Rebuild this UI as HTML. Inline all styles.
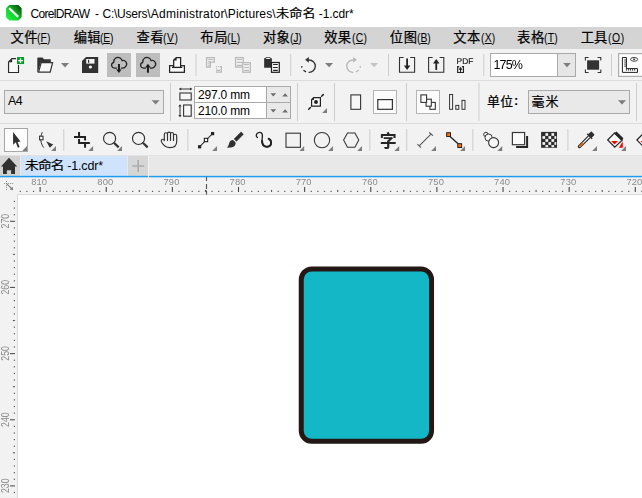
<!DOCTYPE html>
<html lang="zh">
<head>
<meta charset="utf-8">
<title>CorelDRAW</title>
<style>
html,body{margin:0;padding:0;}
body{width:642px;height:498px;overflow:hidden;background:#fff;position:relative;
 font-family:"Liberation Sans","Noto Sans CJK SC",sans-serif;color:#000;}
.abs{position:absolute;}
svg{position:absolute;left:0;overflow:hidden;}
#title{left:0;top:0;width:642px;height:27px;background:#fff;}
#title span{position:absolute;top:7px;font-size:12px;line-height:15px;white-space:nowrap;}
#menu{left:0;top:27px;width:642px;height:22px;background:#d4d4d4;}
#menu span{position:absolute;top:3px;font-size:12px;line-height:16px;white-space:nowrap;letter-spacing:0.2px;}
#menu span b{font-weight:normal;font-size:11px;letter-spacing:-0.3px;}
#tb1{left:0;top:49px;width:642px;height:31px;background:#f2f2f2;}
#pb{left:0;top:80px;width:642px;height:43px;background:#f2f2f2;border-top:1px solid #dcdcdc;box-sizing:border-box;}
#tools{left:0;top:123px;width:642px;height:33px;background:#f2f2f2;border-top:1px solid #dcdcdc;box-sizing:border-box;}
#tabs{left:0;top:156px;width:642px;height:20px;background:#e8e8e8;}
#hr{left:0;top:177px;width:642px;height:18px;background:#f2f2f2;}
#vr{left:0;top:195px;width:18px;height:303px;background:#f2f2f2;}
#canvas{left:17px;top:194px;width:625px;height:304px;background:#fff;border-left:1px solid #dadada;border-top:1px solid #dadada;box-sizing:border-box;}
.tx{position:absolute;font-size:12px;line-height:15px;white-space:nowrap;}
.tx u{text-decoration:underline;text-underline-offset:1px;}
</style>
</head>
<body>
<div id="title" class="abs">
 <svg style="top:0" width="30" height="27" viewBox="0 0 30 27">
  <defs><linearGradient id="lg" x1="0.95" y1="0.05" x2="0.1" y2="0.9"><stop offset="0" stop-color="#04560a"/><stop offset="0.3" stop-color="#0c8a1c"/><stop offset="0.6" stop-color="#14cf30"/><stop offset="1" stop-color="#1cf03a"/></linearGradient>
  <linearGradient id="lw" x1="0" y1="0" x2="1" y2="1"><stop offset="0" stop-color="#ffffff"/><stop offset="1" stop-color="#d9f5dc"/></linearGradient></defs>
  <path d="M9.6,5.8 H18.1 L20.9,8.6 V17 L18.1,19.8 H9.6 L6.8,17 V8.6 Z" fill="url(#lg)" stroke="url(#lg)" stroke-width="1.5" stroke-linejoin="round"/>
  <path d="M10,9 L17.3,16.1" stroke="url(#lw)" stroke-width="2.3" stroke-linecap="square"/>
 </svg>
<div class="tx" id="t1" style="left:30.40px;top:7.00px;font-size:12px;letter-spacing:-0.656px">CorelDRAW</div>
<div class="tx" id="t2" style="left:95.10px;top:7.00px;font-size:12px;letter-spacing:0.000px">-</div>
<div class="tx" id="t3" style="left:102.45px;top:7.00px;font-size:12px;letter-spacing:-0.219px">C:\Users\</div>
<div class="tx" id="t4" style="left:150.85px;top:7.00px;font-size:12px;letter-spacing:0.250px">Administrator</div>
<div class="tx" id="t5" style="left:224.35px;top:7.00px;font-size:12px;letter-spacing:0.139px">\Pictures\</div>
<div class="tx" id="t6" style="left:275.95px;top:7.00px;font-size:12px;letter-spacing:0.032px;transform:scaleX(1.1);transform-origin:0 0;-webkit-text-stroke:0.22px #000">未命名</div>
<div class="tx" id="t7" style="left:318.75px;top:7.00px;font-size:12px;letter-spacing:-0.083px">-1.cdr*</div>
</div>
<div id="menu" class="abs"></div>
<div class="tx" id="mc0" style="left:10.60px;top:30.20px;font-size:13.3px;letter-spacing:0.400px;-webkit-text-stroke:0.22px #000">文件</div>
<div class="tx" id="ml0" style="left:37.21px;top:30.30px;font-size:13px;letter-spacing:0.119px;transform:scaleX(0.8);transform-origin:0 0">(<u>F</u>)</div>
<div class="tx" id="mc1" style="left:73.85px;top:30.20px;font-size:13.3px;letter-spacing:0.200px;-webkit-text-stroke:0.22px #000">编辑</div>
<div class="tx" id="ml1" style="left:100.10px;top:30.30px;font-size:13px;letter-spacing:-0.337px;transform:scaleX(0.8);transform-origin:0 0">(<u>E</u>)</div>
<div class="tx" id="mc2" style="left:136.60px;top:30.20px;font-size:13.3px;letter-spacing:0.450px;-webkit-text-stroke:0.22px #000">查看</div>
<div class="tx" id="ml2" style="left:162.60px;top:30.30px;font-size:13px;letter-spacing:0.662px;transform:scaleX(0.8);transform-origin:0 0">(<u>V</u>)</div>
<div class="tx" id="mc3" style="left:200.35px;top:30.20px;font-size:13.3px;letter-spacing:0.600px;-webkit-text-stroke:0.22px #000">布局</div>
<div class="tx" id="ml3" style="left:227.26px;top:30.30px;font-size:13px;letter-spacing:0.331px;transform:scaleX(0.8);transform-origin:0 0">(<u>L</u>)</div>
<div class="tx" id="mc4" style="left:263.10px;top:30.20px;font-size:13.3px;letter-spacing:-0.000px;-webkit-text-stroke:0.22px #000">对象</div>
<div class="tx" id="ml4" style="left:289.60px;top:30.30px;font-size:13px;letter-spacing:-0.244px;transform:scaleX(0.8);transform-origin:0 0">(<u>J</u>)</div>
<div class="tx" id="mc5" style="left:324.35px;top:30.20px;font-size:13.3px;letter-spacing:0.200px;-webkit-text-stroke:0.22px #000">效果</div>
<div class="tx" id="ml5" style="left:351.60px;top:30.30px;font-size:13px;letter-spacing:0.287px;transform:scaleX(0.8);transform-origin:0 0">(<u>C</u>)</div>
<div class="tx" id="mc6" style="left:389.85px;top:30.20px;font-size:13.3px;letter-spacing:0.550px;-webkit-text-stroke:0.22px #000">位图</div>
<div class="tx" id="ml6" style="left:416.60px;top:30.30px;font-size:13px;letter-spacing:-0.125px;transform:scaleX(0.8);transform-origin:0 0">(<u>B</u>)</div>
<div class="tx" id="mc7" style="left:453.35px;top:30.20px;font-size:13.3px;letter-spacing:0.350px;-webkit-text-stroke:0.22px #000">文本</div>
<div class="tx" id="ml7" style="left:480.60px;top:30.30px;font-size:13px;letter-spacing:0.206px;transform:scaleX(0.8);transform-origin:0 0">(<u>X</u>)</div>
<div class="tx" id="mc8" style="left:517.10px;top:30.20px;font-size:13.3px;letter-spacing:0.500px;-webkit-text-stroke:0.22px #000">表格</div>
<div class="tx" id="ml8" style="left:544.10px;top:30.30px;font-size:13px;letter-spacing:0.331px;transform:scaleX(0.8);transform-origin:0 0">(<u>T</u>)</div>
<div class="tx" id="mc9" style="left:580.85px;top:30.20px;font-size:13.3px;letter-spacing:-0.100px;-webkit-text-stroke:0.22px #000">工具</div>
<div class="tx" id="ml9" style="left:608.10px;top:30.30px;font-size:13px;letter-spacing:0.756px;transform:scaleX(0.8);transform-origin:0 0">(<u>O</u>)</div>
<div id="tb1" class="abs"></div>
<svg style="top:49px;will-change:transform" width="642" height="31" viewBox="0 49 642 31">
<path d="M8.55,72.45 V61.9 L11.9,58.55 H18.5 V72.45 Z" fill="#f8f8f8" stroke="#2a2a2a" stroke-width="1.15"/>
<path d="M8.5,62.2 L12.1,58.5 V62.2 Z" fill="#2a2a2a"/>
<rect x="16" y="56" width="9" height="9" fill="#f8f8f8"/>
<rect x="17" y="57" width="7.1" height="7.1" fill="#0c9b2b"/>
<path d="M20.55,58.2 V62.9 M18.2,60.55 H22.9" stroke="#fff" stroke-width="1.25"/>
<path d="M37.3,72.6 V58.2 Q37.3,57.4 38.2,57.4 H42.6 L44,59.3 H50.8 V62 H41 L37.8,72.6 Z" fill="#333"/>
<path d="M41.2,62.6 H52.6 L50.2,72.2 H38.6 Z" fill="#f7f7f7" stroke="#333" stroke-width="1.2"/>
<path d="M61,63 H69 L65,67.4 Z" fill="#7d7d7d"/>
<path d="M82,61 L86,57 H98.2 V73 H82 Z" fill="#333"/>
<rect x="86.2" y="59" width="8.3" height="4.6" fill="#f4f4f4"/>
<rect x="88" y="59.8" width="1.2" height="3" fill="#333"/>
<circle cx="90.4" cy="67" r="1.6" fill="#f4f4f4"/>
<rect x="107" y="53" width="24" height="24" fill="#bdbdbd"/>
<path d="M116.5,68 H114.5 C111.30000000000001,68 110.30000000000001,63.2 113.80000000000001,62.3 C113.5,58.6 117.10000000000001,56.2 120.10000000000001,58 C121.10000000000001,58.6 121.80000000000001,59.5 122.10000000000001,60.6 C125.5,59.6 128.1,63.6 125.80000000000001,66.4 C125.10000000000001,67.4 124.10000000000001,68 122.9,68 H121.30000000000001" fill="none" stroke="#222" stroke-width="1.25" stroke-linecap="round"/>
<path d="M118.95,64 V70.6" stroke="#1c1c1c" stroke-width="2"/><path d="M116.2,69.6 H121.7 L118.95,73 Z" fill="#1c1c1c"/>
<rect x="136" y="53" width="24" height="24" fill="#bdbdbd"/>
<path d="M145.5,68 H143.5 C140.3,68 139.3,63.2 142.8,62.3 C142.5,58.6 146.1,56.2 149.1,58 C150.1,58.6 150.8,59.5 151.1,60.6 C154.5,59.6 157.1,63.6 154.8,66.4 C154.1,67.4 153.1,68 151.9,68 H150.3" fill="none" stroke="#222" stroke-width="1.25" stroke-linecap="round"/>
<path d="M147.95,66.4 V72.7" stroke="#1c1c1c" stroke-width="2"/><path d="M145.1,67.5 H150.8 L147.95,63.7 Z" fill="#1c1c1c"/>
<rect x="169.6" y="65.7" width="14.8" height="6.6" fill="#fbfbfb" stroke="#222" stroke-width="1.25"/>
<path d="M173.7,67.3 V60.1 L176.3,57.6 H180.6 V67.3" fill="#fbfbfb" stroke="#222" stroke-width="1.25"/>
<path d="M173.7,60.6 L176.6,57.6 V60.6 Z" fill="#222"/>
<path d="M172,67.4 H182.3" stroke="#222" stroke-width="1.3"/>
<rect x="195.5" y="54" width="1" height="22" fill="#cdcdcd"/>
<path d="M206.6,57.6 H214.3 V62.2 H210.3 V67.2 H206.6 Z" fill="none" stroke="#b9b9b9" stroke-width="1.3"/>
<path d="M208.2,59.5 H212.8 M208.2,61.6 H210.6 M208.2,63.8 H209.8 M208.2,65.6 H209.8" stroke="#b9b9b9" stroke-width="1.1"/>
<path d="M219.8,66.6 H221.3 V72.2 H216" fill="none" stroke="#b9b9b9" stroke-width="1.3"/>
<path d="M216,70.4 H220" stroke="#b9b9b9" stroke-width="1.2"/>
<rect x="215.9" y="66" width="1.1" height="1.1" fill="#b9b9b9"/><rect x="218" y="66" width="1.1" height="1.1" fill="#b9b9b9"/><rect x="215.9" y="68.1" width="1.1" height="1.1" fill="#b9b9b9"/>
<rect x="235.6" y="57.6" width="7.6" height="9.5" fill="#f4f4f4" stroke="#b9b9b9" stroke-width="1.3"/>
<path d="M237,59.5 H242 M237,62.4 H242 M237,65.3 H242" stroke="#b9b9b9" stroke-width="1.2"/>
<rect x="242.8" y="62.7" width="7.5" height="9.5" fill="#f4f4f4" stroke="#b9b9b9" stroke-width="1.3"/>
<path d="M244.2,64.6 H248.9 M244.2,67.5 H248.9 M244.2,70.4 H248.9" stroke="#b9b9b9" stroke-width="1.2"/>
<path d="M264.15,58.3 H265.2 L265.9,57.2 H270.1 L270.8,58.3 H271.85 V67.65 H264.15 Z" fill="#2f2f2f"/>
<rect x="266.1" y="58" width="4" height="1.1" rx="0.4" fill="#f6f6f6"/>
<rect x="271.5" y="62.5" width="7.8" height="9.8" fill="#fbfbfb" stroke="#222" stroke-width="1.25"/>
<path d="M273.1,64.5 H277.8 M273.1,67.45 H277.8 M273.1,70.4 H277.8" stroke="#222" stroke-width="1.1"/>
<rect x="290.2" y="54" width="1" height="22" fill="#cdcdcd"/>
<path d="M308.8,60 A6.2,6.2 0 1 1 308.6,72.37" fill="none" stroke="#333" stroke-width="1.35"/>
<path d="M306,71.9 L303.4,70.2" stroke="#333" stroke-width="1.3"/><circle cx="301.8" cy="66.8" r="0.85" fill="#333"/>
<path d="M305.1,59.8 L308.9,56.9 V62.7 Z" fill="#333"/>
<path d="M325,63.1 H333.1 L329.05,67.2 Z" fill="#7d7d7d"/>
<path d="M353.25,60 A6.2,6.2 0 1 0 353.45,72.37" fill="none" stroke="#b9b9b9" stroke-width="1.35"/>
<path d="M356.05,71.9 L358.65,70.2" stroke="#b9b9b9" stroke-width="1.3"/><circle cx="360.3" cy="66.8" r="0.85" fill="#b9b9b9"/>
<path d="M356.95,59.8 L353.15,56.9 V62.7 Z" fill="#b9b9b9"/>
<path d="M370.2,63.1 H378 L374.1,67.2 Z" fill="#c4c4c4"/>
<rect x="388" y="54" width="1" height="22" fill="#cdcdcd"/>
<path d="M403.6,57.5 H399.5 V72.3 H414.6 V57.5 H410.2" fill="none" stroke="#333" stroke-width="1.1"/>
<path d="M407.1,58.6 V67" stroke="#222" stroke-width="1.8"/><path d="M403.9,65.6 H410.3 L407.1,70 Z" fill="#222"/>
<path d="M432.7,57.5 H428.6 V72.3 H443.8 V57.5 H439.6" fill="none" stroke="#333" stroke-width="1.1"/>
<path d="M436.25,62 V70" stroke="#222" stroke-width="1.8"/><path d="M433,63.4 H439.5 L436.25,59 Z" fill="#222"/>
<text x="456.6" y="63.8" font-family="Liberation Sans, sans-serif" font-size="8.4" letter-spacing="0.05" fill="#222" stroke="#222" stroke-width="0.2" style="text-rendering:geometricPrecision">PDF</text>
<path d="M459.2,66.55 H457.65 V72.45 H463.45 V66.55 H461.9" fill="none" stroke="#222" stroke-width="1.15"/>
<path d="M460.55,69 V72.4" stroke="#222" stroke-width="1.1"/><path d="M458.5,69.7 L460.55,66.8 L462.6,69.7 Z" fill="#222"/>
<rect x="483.3" y="54" width="1" height="22" fill="#cdcdcd"/>
<rect x="490.5" y="53.5" width="85" height="23" fill="#fff" stroke="#a9a9a9" stroke-width="1"/>
<rect x="558" y="54" width="17" height="22" fill="#e6e6e6"/>
<rect x="557" y="54" width="1" height="22" fill="#a9a9a9"/>
<path d="M563.2,63 H570.8 L567,67.2 Z" fill="#7d7d7d"/>
<rect x="587.1" y="60.3" width="12" height="9.4" fill="#333"/>
<path d="M585.4,60.6 V57.5 H588.6 M597.6,57.5 H600.8 V60.6 M585.4,69.4 V72.5 H588.6 M597.6,72.5 H600.8 V69.4" fill="none" stroke="#333" stroke-width="1.1"/>
<rect x="611" y="54" width="1" height="22" fill="#cdcdcd"/>
<rect x="618.6" y="53.6" width="30" height="22.8" fill="#fdfdfd" stroke="#adadad" stroke-width="1.2"/>
<path d="M622.4,57.5 H626.4 V68.6 H637.5 V72.4 H622.4 Z" fill="#fbfbfb" stroke="#222" stroke-width="1"/>
<path d="M624.2,60 H626.4 M624.2,62.05 H626.4 M624.2,64.1 H626.4 M624.2,66.15 H626.4 M626.4,68.6 V70.7 M628.5,68.6 V70.7 M630.55,68.6 V70.7 M632.6,68.6 V70.7 M634.65,68.6 V70.7" stroke="#222" stroke-width="0.85"/>
<ellipse cx="634.1" cy="59.35" rx="3.6" ry="1.9" fill="#fff" stroke="#2a2a2a" stroke-width="0.9"/><ellipse cx="634.1" cy="59.35" rx="1.1" ry="0.8" fill="#2a2a2a"/>
</svg>
<div class="tx" id="z175" style="left:493.60px;top:58.00px;font-size:12.5px;letter-spacing:-0.933px">175%</div>
<div id="pb" class="abs"></div>
<svg style="top:81px" width="642" height="42" viewBox="0 81 642 42">
<rect x="4.5" y="90.5" width="159" height="23" fill="#e9e9e9" stroke="#a9a9a9" stroke-width="1"/>
<path d="M151.6,100.2 H159.6 L155.6,104.6 Z" fill="#7d7d7d"/>
<rect x="170" y="83" width="1" height="38" fill="#cdcdcd"/>
<path d="M179.6,89 H191.6" stroke="#333" stroke-width="1"/><path d="M179,89 L181.2,87.4 V90.6 Z M192.2,89 L190,87.4 V90.6 Z" fill="#333"/>
<rect x="179.9" y="93" width="11.3" height="7" fill="#f7f7f7" stroke="#333" stroke-width="1.1"/>
<path d="M180,105 V116.4" stroke="#333" stroke-width="1"/><path d="M180,104.2 L178.4,106.4 H181.6 Z M180,117.2 L178.4,115 H181.6 Z" fill="#333"/>
<rect x="183.6" y="105" width="7.6" height="11.2" fill="#f7f7f7" stroke="#333" stroke-width="1.1"/>
<rect x="194.5" y="86.5" width="96" height="32" fill="#fff" stroke="#a9a9a9" stroke-width="1"/>
<rect x="267" y="87" width="23" height="31" fill="#e9e9e9"/>
<rect x="266" y="87" width="1" height="31" fill="#a9a9a9"/>
<rect x="195" y="102" width="95" height="1" fill="#a9a9a9"/>
<path d="M270.4,93.2 H276.2 L273.3,96.4 Z M282.2,96.4 H288 L285.1,93.2 Z" fill="#6e6e6e"/>
<path d="M270.4,109.2 H276.2 L273.3,112.4 Z M282.2,112.4 H288 L285.1,109.2 Z" fill="#6e6e6e"/>
<rect x="297" y="83" width="1" height="38" fill="#cdcdcd"/>
<path d="M311.6,99.7 L313.7,97.6 H320.4 V106.05 H311.6 Z" fill="#f9f9f9" stroke="#222" stroke-width="1.2"/>
<path d="M311.6,100 L314,97.6 V100 Z" fill="#222"/>
<circle cx="316" cy="102" r="1.95" fill="#222"/>
<path d="M321.6,96.3 L323.3,94.6 M310.4,107.5 L308.7,109.2" stroke="#222" stroke-width="1.5" stroke-linecap="round"/>
<path d="M327,108.1 L327,112.9 L322.2,112.9 Z" fill="#7d7d7d"/>
<rect x="334" y="83" width="1" height="38" fill="#cdcdcd"/>
<rect x="350.9" y="94.9" width="9.7" height="14.4" fill="#f7f7f7" stroke="#333" stroke-width="1.1"/>
<rect x="373.5" y="90.5" width="23" height="23" fill="#fbfbfb" stroke="#b4b4b4" stroke-width="1"/>
<rect x="377.8" y="99.6" width="14.6" height="9.7" fill="#fff" stroke="#333" stroke-width="1.2"/>
<rect x="406" y="83" width="1" height="38" fill="#cdcdcd"/>
<rect x="416.5" y="90.5" width="23" height="23" fill="#fbfbfb" stroke="#b4b4b4" stroke-width="1"/>
<rect x="429.9" y="102.4" width="5.4" height="6.9" fill="#fff" stroke="#333" stroke-width="1.1"/>
<rect x="426.1" y="99.2" width="5.2" height="7" fill="#fff" stroke="#333" stroke-width="1.1"/>
<rect x="420.9" y="94.9" width="5.7" height="7.5" fill="#fff" stroke="#333" stroke-width="1.1"/>
<rect x="449.6" y="94.5" width="3" height="14.8" fill="#f7f7f7" stroke="#333" stroke-width="1"/>
<rect x="455.8" y="105.4" width="3" height="3.9" fill="#f7f7f7" stroke="#333" stroke-width="1"/>
<rect x="462" y="100.4" width="3" height="8.9" fill="#f7f7f7" stroke="#333" stroke-width="1"/>
<rect x="478.5" y="83" width="1" height="38" fill="#cdcdcd"/>
<rect x="528.5" y="90.5" width="101" height="23" fill="#e9e9e9" stroke="#a9a9a9" stroke-width="1"/>
<path d="M618,100.2 H626 L622,104.6 Z" fill="#7d7d7d"/>
<rect x="636" y="83" width="1" height="38" fill="#cdcdcd"/>
</svg>
<div class="tx" id="a4" style="left:7.90px;top:93.90px;font-size:12.4px;letter-spacing:-0.400px">A4</div>
<div class="tx" id="w297" style="left:198.10px;top:87.50px;font-size:12px;letter-spacing:-0.207px">297.0 mm</div>
<div class="tx" id="h210" style="left:198.10px;top:103.50px;font-size:12px;letter-spacing:-0.207px">210.0 mm</div>
<div class="tx" id="unit" style="left:486.90px;top:93.50px;font-size:12.8px;letter-spacing:0.550px;-webkit-text-stroke:0.22px #000">单位</div>
<div class="tx" id="colon" style="left:513.90px;top:92.50px;font-size:13px;letter-spacing:0.000px;font-weight:bold">:</div>
<div class="tx" id="mm" style="left:531.45px;top:93.50px;font-size:13px;letter-spacing:1.000px;-webkit-text-stroke:0.22px #000">毫米</div>
<div id="tools" class="abs"></div>
<svg style="top:124px;will-change:transform" width="642" height="32" viewBox="0 124 642 32">
<rect x="4.5" y="128.5" width="23" height="23" fill="#fdfdfd" stroke="#a6a6a6" stroke-width="1"/>
<path d="M13.1,132 V144.8 L15.8,142.3 L17.8,147.7 L19.6,147 L17.6,141.9 L20.5,141.6 Z" fill="#303030"/>
<path d="M27,146.1 L27,150.9 L22.2,150.9 Z" fill="#7d7d7d"/>
<path d="M42.3,132.2 C39.8,137.4 40.3,143.2 43.7,147.6" fill="none" stroke="#333" stroke-width="1"/>
<rect x="39.6" y="136.2" width="3.4" height="3.6" fill="#fff" stroke="#333" stroke-width="1.1"/>
<path d="M46.2,141.2 L53.2,144.4 L49.8,147.8 Z" fill="#333"/>
<path d="M56,146.1 L56,150.9 L51.2,150.9 Z" fill="#7d7d7d"/>
<rect x="63.3" y="129" width="1" height="22" fill="#cdcdcd"/>
<path d="M79.05,132.1 V137.5 M74,136.9 H86.05 M85.05,136 V140.6 M79.05,139.1 V143.9 M78.05,142.95 H89.9 M85.05,142.2 V147.7" fill="none" stroke="#222" stroke-width="2"/>
<path d="M93.1,146.1 L93.1,150.9 L88.3,150.9 Z" fill="#7d7d7d"/>
<circle cx="109.6" cy="138.4" r="6.05" fill="none" stroke="#333" stroke-width="1.15"/>
<path d="M113.9,142.8 L118.7,147.4" stroke="#333" stroke-width="2.2"/>
<path d="M122,146.1 L122,150.9 L117.2,150.9 Z" fill="#7d7d7d"/>
<circle cx="138.55" cy="138.4" r="6.05" fill="none" stroke="#333" stroke-width="1.15"/>
<path d="M142.85,142.8 L147.65,147.4" stroke="#333" stroke-width="2.2"/>
<path d="M164.35,140.6 V134.2 Q164.35,132.7 165.9,132.7 Q167.5,132.7 167.5,134.2 V140.4 M167.5,133.6 Q167.5,132.1 169,132.1 Q170.5,132.1 170.5,133.6 V140.4 M170.5,134 Q170.5,132.5 172,132.5 Q173.5,132.5 173.5,134 V140.4 M173.5,135.6 Q173.5,134.2 175.1,134.2 Q176.7,134.2 176.7,135.8 V141.4 C176.7,145.5 173.8,147.6 169.8,147.6 C166,147.6 163.6,145.7 161.7,142.2 C160.9,140.6 161.3,139.4 162.4,139.3 C163.3,139.2 163.9,139.8 164.35,140.6" fill="none" stroke="#333" stroke-width="1.15" stroke-linejoin="round" stroke-linecap="round"/>
<rect x="187.4" y="129" width="1" height="22" fill="#cdcdcd"/>
<path d="M199.5,146.8 L212.5,133.6" stroke="#333" stroke-width="1.1"/>
<rect x="198" y="145.2" width="3.2" height="3.2" fill="#222"/><rect x="211" y="132" width="3.2" height="3.2" fill="#222"/>
<rect x="204.35" y="138.35" width="3.3" height="3.3" fill="#fff" stroke="#222" stroke-width="1.1"/>
<path d="M217,146.1 L217,150.9 L212.2,150.9 Z" fill="#7d7d7d"/>
<path d="M241.1,131.9 L243.4,134.2 L236.5,141.3 L234.1,139 Z" fill="#303030" stroke="#303030" stroke-width="0.6" stroke-linejoin="round"/>
<path d="M233,140 L235.6,142.6 C235.9,145.4 233.8,147.4 231,147.5 C229.6,147.6 228.2,147.7 226.9,147.6 C228.5,146.4 228.7,144.7 229.2,143.1 C229.8,141.1 231.3,139.9 233,140 Z" fill="#303030"/>
<path d="M257.5,137.5 C256.1,136.8 256,134.9 256.8,133.8 C257.6,132.7 258.7,132.4 259.8,132.4 C261.8,132.4 262.5,134.2 262.4,136.2 C262.3,138.2 261.7,140.2 262,142.2 C262.4,145 264.2,146.8 266.8,146.8 C269.4,146.8 271.2,145 271.2,142.5 C271.2,140.6 270.1,139.2 268.5,138.6" fill="none" stroke="#222" stroke-width="1.35" stroke-linecap="round"/>
<path d="M262.1,141 C262.3,144.6 264,146.7 266.8,146.7 C269.4,146.7 271.1,145 271.1,142.5 C271.1,140.8 270.2,139.5 268.7,138.8" fill="none" stroke="#222" stroke-width="1.9" stroke-linecap="round"/>
<rect x="286" y="133.2" width="14.4" height="14.1" fill="none" stroke="#333" stroke-width="1.1"/>
<path d="M304.2,146.1 L304.2,150.9 L299.4,150.9 Z" fill="#7d7d7d"/>
<circle cx="322" cy="140.1" r="7.7" fill="none" stroke="#333" stroke-width="1.05"/>
<path d="M333,146.1 L333,150.9 L328.2,150.9 Z" fill="#7d7d7d"/>
<path d="M343.6,140.1 L347.5,132.9 H354.9 L358.8,140.1 L354.9,147.3 H347.5 Z" fill="none" stroke="#333" stroke-width="1.05"/>
<path d="M362,146.1 L362,150.9 L357.2,150.9 Z" fill="#7d7d7d"/>
<rect x="369.3" y="129" width="1" height="22" fill="#cdcdcd"/>
<text x="379.7" y="146.5" font-family="Noto Sans CJK SC, sans-serif" font-weight="bold" font-size="17" fill="#262626">字</text>
<path d="M399.2,146.1 L399.2,150.9 L394.4,150.9 Z" fill="#7d7d7d"/>
<rect x="406.2" y="129" width="1" height="22" fill="#cdcdcd"/>
<path d="M419.2,145.8 L431,134.1 M417.4,144.2 L421,147.6 M429.2,132.5 L433,135.6" stroke="#555" stroke-width="1.1"/>
<path d="M436,146.1 L436,150.9 L431.2,150.9 Z" fill="#7d7d7d"/>
<path d="M449.5,136 L458.6,144.2" stroke="#222" stroke-width="1.3"/>
<rect x="446.7" y="132.7" width="3.8" height="3.8" fill="#ff7200" stroke="#222" stroke-width="1"/>
<rect x="457.8" y="143.7" width="3.8" height="3.8" fill="#ff7200" stroke="#222" stroke-width="1"/>
<path d="M465,146.1 L465,150.9 L460.2,150.9 Z" fill="#7d7d7d"/>
<rect x="472.3" y="129" width="1" height="22" fill="#cdcdcd"/>
<circle cx="485.9" cy="134.5" r="2.2" fill="#f7f7f7" stroke="#333" stroke-width="1"/>
<circle cx="488.6" cy="137.6" r="3.6" fill="#f7f7f7" stroke="#333" stroke-width="1"/>
<circle cx="493.6" cy="142.6" r="5" fill="#f7f7f7" stroke="#333" stroke-width="1.1"/>
<path d="M502.2,146.1 L502.2,150.9 L497.4,150.9 Z" fill="#7d7d7d"/>
<rect x="512.4" y="132.5" width="12.2" height="12.2" fill="#fbfbfb" stroke="#3a3a3a" stroke-width="1.2"/>
<path d="M527.1,135.9 V146.95 H516.1" fill="none" stroke="#262626" stroke-width="2"/>
<rect x="541.1" y="131.9" width="15.9" height="15.9" fill="#2e2e2e"/>
<rect x="545.45" y="133.15" width="2.70" height="2.70" fill="#f6f6f6"/>
<rect x="551.45" y="133.15" width="2.70" height="2.70" fill="#f6f6f6"/>
<rect x="542.45" y="136.15" width="2.70" height="2.70" fill="#f6f6f6"/>
<rect x="548.45" y="136.15" width="2.70" height="2.70" fill="#f6f6f6"/>
<rect x="554.45" y="136.15" width="1.80" height="2.70" fill="#f6f6f6"/>
<rect x="545.45" y="139.15" width="2.70" height="2.70" fill="#f6f6f6"/>
<rect x="551.45" y="139.15" width="2.70" height="2.70" fill="#f6f6f6"/>
<rect x="542.45" y="142.15" width="2.70" height="2.70" fill="#f6f6f6"/>
<rect x="548.45" y="142.15" width="2.70" height="2.70" fill="#f6f6f6"/>
<rect x="554.45" y="142.15" width="1.80" height="2.70" fill="#f6f6f6"/>
<rect x="545.45" y="145.15" width="2.70" height="2.00" fill="#f6f6f6"/>
<rect x="551.45" y="145.15" width="2.70" height="2.00" fill="#f6f6f6"/>
<rect x="567.4" y="129" width="1" height="22" fill="#cdcdcd"/>
<path d="M590.11,137.52 L580.21,147.41 Q579.40,148.02 578.69,147.31 Q577.98,146.60 578.59,145.79 L588.48,135.89" fill="#fafafa" stroke="#222" stroke-width="1.1"/>
<path d="M579.96,146.88 L583.64,143.21 L582.79,142.36 L579.12,146.04 Q579.19,146.81 579.96,146.88 Z" fill="#f46a00" stroke="#f46a00" stroke-width="0.2"/>
<path d="M591.63,139.32 L592.69,138.26 L591.91,137.48 L594.18,135.22 Q594.67,134.72 594.18,134.23 L591.77,131.82 Q591.28,131.33 590.78,131.82 L588.52,134.09 L587.74,133.31 L586.68,134.37 Z" fill="#2e2e2e"/>
<path d="M597,146.1 L597,150.9 L592.2,150.9 Z" fill="#7d7d7d"/>
<path d="M607.7,140 L614.75,132.9 L622.4,140 L614.75,147.2 Z" fill="#fbfbfb" stroke="#222" stroke-width="1.15"/>
<path d="M611.2,140.9 H618 L614.6,144.5 Z" fill="#f00"/>
<path d="M615.3,132.6 L622.3,139.4" stroke="#262626" stroke-width="3.3"/>
<path d="M622.8,141.2 V147.7 H618.9 Z" fill="#f00"/>
<path d="M626,146.1 L626,150.9 L621.2,150.9 Z" fill="#7d7d7d"/>
<path d="M636.9000000000001,140 L643.95,132.9 L651.6,140 L643.95,147.2 Z" fill="#fbfbfb" stroke="#222" stroke-width="1.15"/>
<path d="M640.4000000000001,140.9 H647.2 L643.8000000000001,144.5 Z" fill="#f00"/>
<path d="M644.5,132.6 L651.5,139.4" stroke="#262626" stroke-width="3.3"/>
<path d="M652.0,141.2 V147.7 H648.1 Z" fill="#f00"/>
</svg>
<div class="abs" style="left:0;top:155px;width:642px;height:1px;background:#e2e2e2;"></div>
<div id="tabs" class="abs">
 <div class="abs" style="left:0;top:0;width:20px;height:20px;background:#d2d2d2;"></div>
 <div class="abs" style="left:21px;top:0;width:106px;height:20px;background:#cfe3fd;"></div>
 <div class="abs" style="left:128px;top:0;width:20px;height:20px;background:#d6d6d6;"></div>
 <div class="abs" style="left:148px;top:0;width:1px;height:20px;background:#f4f4f4;"></div>
 <svg style="top:0" width="160" height="20" viewBox="0 156 160 20">
  <path d="M9,157.8 L17.2,166.6 H15 V173.9 H11.1 V170.2 H6.9 V173.9 H3 V166.6 H0.9 Z" fill="#303030"/>
  <path d="M132.2,166 H144.2 M138.2,160 V172" stroke="#acacac" stroke-width="1.6"/>
 </svg>
</div>
<div class="tx" id="tabc" style="left:24.60px;top:158.60px;font-size:12.5px;letter-spacing:-0.766px;transform:scaleX(1.1);transform-origin:0 0;-webkit-text-stroke:0.22px #000">未命名</div>
<div class="tx" id="tabl" style="left:67.25px;top:158.50px;font-size:12.5px;letter-spacing:-0.167px">-1.cdr*</div>
<div class="abs" style="left:0;top:175px;width:642px;height:1px;background:rgba(30,155,240,0.18);"></div>
<div class="abs" style="left:0;top:176px;width:642px;height:1px;background:#1e9bf0;"></div>
<div class="abs" style="left:0;top:177px;width:642px;height:1px;background:rgba(30,155,240,0.3);z-index:3"></div>
<div class="abs" style="left:148px;top:156px;width:1px;height:22px;background:#f2f2f2;z-index:4"></div>
<div id="hr" class="abs"></div>
<div id="vr" class="abs"></div>
<div id="canvas" class="abs"></div>
<svg style="top:177px" width="642" height="18" viewBox="0 177 642 18">
<rect x="19.68" y="190.8" width="1.2" height="1.2" fill="#5a5a5a"/>
<rect x="26.29" y="190.8" width="1.2" height="1.2" fill="#5a5a5a"/>
<rect x="32.91" y="190.8" width="1.2" height="1.2" fill="#5a5a5a"/>
<rect x="39.57" y="187" width="1.1" height="5" fill="#4a4a4a"/>
<rect x="46.13" y="190.8" width="1.2" height="1.2" fill="#5a5a5a"/>
<rect x="52.75" y="190.8" width="1.2" height="1.2" fill="#5a5a5a"/>
<rect x="59.36" y="190.8" width="1.2" height="1.2" fill="#5a5a5a"/>
<rect x="65.97" y="190.8" width="1.2" height="1.2" fill="#5a5a5a"/>
<rect x="72.64" y="189.9" width="1.1" height="2.1" fill="#5a5a5a"/>
<rect x="79.20" y="190.8" width="1.2" height="1.2" fill="#5a5a5a"/>
<rect x="85.81" y="190.8" width="1.2" height="1.2" fill="#5a5a5a"/>
<rect x="92.42" y="190.8" width="1.2" height="1.2" fill="#5a5a5a"/>
<rect x="99.04" y="190.8" width="1.2" height="1.2" fill="#5a5a5a"/>
<rect x="105.70" y="187" width="1.1" height="5" fill="#4a4a4a"/>
<rect x="112.26" y="190.8" width="1.2" height="1.2" fill="#5a5a5a"/>
<rect x="118.88" y="190.8" width="1.2" height="1.2" fill="#5a5a5a"/>
<rect x="125.49" y="190.8" width="1.2" height="1.2" fill="#5a5a5a"/>
<rect x="132.10" y="190.8" width="1.2" height="1.2" fill="#5a5a5a"/>
<rect x="138.76" y="189.9" width="1.1" height="2.1" fill="#5a5a5a"/>
<rect x="145.33" y="190.8" width="1.2" height="1.2" fill="#5a5a5a"/>
<rect x="151.94" y="190.8" width="1.2" height="1.2" fill="#5a5a5a"/>
<rect x="158.55" y="190.8" width="1.2" height="1.2" fill="#5a5a5a"/>
<rect x="165.17" y="190.8" width="1.2" height="1.2" fill="#5a5a5a"/>
<rect x="171.83" y="187" width="1.1" height="5" fill="#4a4a4a"/>
<rect x="178.39" y="190.8" width="1.2" height="1.2" fill="#5a5a5a"/>
<rect x="185.01" y="190.8" width="1.2" height="1.2" fill="#5a5a5a"/>
<rect x="191.62" y="190.8" width="1.2" height="1.2" fill="#5a5a5a"/>
<rect x="198.23" y="190.8" width="1.2" height="1.2" fill="#5a5a5a"/>
<rect x="204.89" y="189.9" width="1.1" height="2.1" fill="#5a5a5a"/>
<rect x="211.46" y="190.8" width="1.2" height="1.2" fill="#5a5a5a"/>
<rect x="218.07" y="190.8" width="1.2" height="1.2" fill="#5a5a5a"/>
<rect x="224.68" y="190.8" width="1.2" height="1.2" fill="#5a5a5a"/>
<rect x="231.30" y="190.8" width="1.2" height="1.2" fill="#5a5a5a"/>
<rect x="237.96" y="187" width="1.1" height="5" fill="#4a4a4a"/>
<rect x="244.52" y="190.8" width="1.2" height="1.2" fill="#5a5a5a"/>
<rect x="251.14" y="190.8" width="1.2" height="1.2" fill="#5a5a5a"/>
<rect x="257.75" y="190.8" width="1.2" height="1.2" fill="#5a5a5a"/>
<rect x="264.36" y="190.8" width="1.2" height="1.2" fill="#5a5a5a"/>
<rect x="271.03" y="189.9" width="1.1" height="2.1" fill="#5a5a5a"/>
<rect x="277.59" y="190.8" width="1.2" height="1.2" fill="#5a5a5a"/>
<rect x="284.20" y="190.8" width="1.2" height="1.2" fill="#5a5a5a"/>
<rect x="290.81" y="190.8" width="1.2" height="1.2" fill="#5a5a5a"/>
<rect x="297.43" y="190.8" width="1.2" height="1.2" fill="#5a5a5a"/>
<rect x="304.09" y="187" width="1.1" height="5" fill="#4a4a4a"/>
<rect x="310.65" y="190.8" width="1.2" height="1.2" fill="#5a5a5a"/>
<rect x="317.27" y="190.8" width="1.2" height="1.2" fill="#5a5a5a"/>
<rect x="323.88" y="190.8" width="1.2" height="1.2" fill="#5a5a5a"/>
<rect x="330.49" y="190.8" width="1.2" height="1.2" fill="#5a5a5a"/>
<rect x="337.16" y="189.9" width="1.1" height="2.1" fill="#5a5a5a"/>
<rect x="343.72" y="190.8" width="1.2" height="1.2" fill="#5a5a5a"/>
<rect x="350.33" y="190.8" width="1.2" height="1.2" fill="#5a5a5a"/>
<rect x="356.94" y="190.8" width="1.2" height="1.2" fill="#5a5a5a"/>
<rect x="363.56" y="190.8" width="1.2" height="1.2" fill="#5a5a5a"/>
<rect x="370.22" y="187" width="1.1" height="5" fill="#4a4a4a"/>
<rect x="376.78" y="190.8" width="1.2" height="1.2" fill="#5a5a5a"/>
<rect x="383.40" y="190.8" width="1.2" height="1.2" fill="#5a5a5a"/>
<rect x="390.01" y="190.8" width="1.2" height="1.2" fill="#5a5a5a"/>
<rect x="396.62" y="190.8" width="1.2" height="1.2" fill="#5a5a5a"/>
<rect x="403.29" y="189.9" width="1.1" height="2.1" fill="#5a5a5a"/>
<rect x="409.85" y="190.8" width="1.2" height="1.2" fill="#5a5a5a"/>
<rect x="416.46" y="190.8" width="1.2" height="1.2" fill="#5a5a5a"/>
<rect x="423.07" y="190.8" width="1.2" height="1.2" fill="#5a5a5a"/>
<rect x="429.69" y="190.8" width="1.2" height="1.2" fill="#5a5a5a"/>
<rect x="436.35" y="187" width="1.1" height="5" fill="#4a4a4a"/>
<rect x="442.91" y="190.8" width="1.2" height="1.2" fill="#5a5a5a"/>
<rect x="449.53" y="190.8" width="1.2" height="1.2" fill="#5a5a5a"/>
<rect x="456.14" y="190.8" width="1.2" height="1.2" fill="#5a5a5a"/>
<rect x="462.75" y="190.8" width="1.2" height="1.2" fill="#5a5a5a"/>
<rect x="469.42" y="189.9" width="1.1" height="2.1" fill="#5a5a5a"/>
<rect x="475.98" y="190.8" width="1.2" height="1.2" fill="#5a5a5a"/>
<rect x="482.59" y="190.8" width="1.2" height="1.2" fill="#5a5a5a"/>
<rect x="489.20" y="190.8" width="1.2" height="1.2" fill="#5a5a5a"/>
<rect x="495.82" y="190.8" width="1.2" height="1.2" fill="#5a5a5a"/>
<rect x="502.48" y="187" width="1.1" height="5" fill="#4a4a4a"/>
<rect x="509.04" y="190.8" width="1.2" height="1.2" fill="#5a5a5a"/>
<rect x="515.66" y="190.8" width="1.2" height="1.2" fill="#5a5a5a"/>
<rect x="522.27" y="190.8" width="1.2" height="1.2" fill="#5a5a5a"/>
<rect x="528.88" y="190.8" width="1.2" height="1.2" fill="#5a5a5a"/>
<rect x="535.55" y="189.9" width="1.1" height="2.1" fill="#5a5a5a"/>
<rect x="542.11" y="190.8" width="1.2" height="1.2" fill="#5a5a5a"/>
<rect x="548.72" y="190.8" width="1.2" height="1.2" fill="#5a5a5a"/>
<rect x="555.33" y="190.8" width="1.2" height="1.2" fill="#5a5a5a"/>
<rect x="561.95" y="190.8" width="1.2" height="1.2" fill="#5a5a5a"/>
<rect x="568.61" y="187" width="1.1" height="5" fill="#4a4a4a"/>
<rect x="575.17" y="190.8" width="1.2" height="1.2" fill="#5a5a5a"/>
<rect x="581.79" y="190.8" width="1.2" height="1.2" fill="#5a5a5a"/>
<rect x="588.40" y="190.8" width="1.2" height="1.2" fill="#5a5a5a"/>
<rect x="595.01" y="190.8" width="1.2" height="1.2" fill="#5a5a5a"/>
<rect x="601.68" y="189.9" width="1.1" height="2.1" fill="#5a5a5a"/>
<rect x="608.24" y="190.8" width="1.2" height="1.2" fill="#5a5a5a"/>
<rect x="614.85" y="190.8" width="1.2" height="1.2" fill="#5a5a5a"/>
<rect x="621.46" y="190.8" width="1.2" height="1.2" fill="#5a5a5a"/>
<rect x="628.08" y="190.8" width="1.2" height="1.2" fill="#5a5a5a"/>
<rect x="634.74" y="187" width="1.1" height="5" fill="#4a4a4a"/>
<rect x="641.30" y="190.8" width="1.2" height="1.2" fill="#5a5a5a"/>
<text x="39.2" y="185.3" text-anchor="middle" font-family="Liberation Sans, sans-serif" font-size="9.4" letter-spacing="0.1" fill="#8a8a8a">810</text>
<text x="105.3" y="185.3" text-anchor="middle" font-family="Liberation Sans, sans-serif" font-size="9.4" letter-spacing="0.1" fill="#8a8a8a">800</text>
<text x="171.5" y="185.3" text-anchor="middle" font-family="Liberation Sans, sans-serif" font-size="9.4" letter-spacing="0.1" fill="#8a8a8a">790</text>
<text x="237.6" y="185.3" text-anchor="middle" font-family="Liberation Sans, sans-serif" font-size="9.4" letter-spacing="0.1" fill="#8a8a8a">780</text>
<text x="303.7" y="185.3" text-anchor="middle" font-family="Liberation Sans, sans-serif" font-size="9.4" letter-spacing="0.1" fill="#8a8a8a">770</text>
<text x="369.9" y="185.3" text-anchor="middle" font-family="Liberation Sans, sans-serif" font-size="9.4" letter-spacing="0.1" fill="#8a8a8a">760</text>
<text x="436.0" y="185.3" text-anchor="middle" font-family="Liberation Sans, sans-serif" font-size="9.4" letter-spacing="0.1" fill="#8a8a8a">750</text>
<text x="502.1" y="185.3" text-anchor="middle" font-family="Liberation Sans, sans-serif" font-size="9.4" letter-spacing="0.1" fill="#8a8a8a">740</text>
<text x="568.3" y="185.3" text-anchor="middle" font-family="Liberation Sans, sans-serif" font-size="9.4" letter-spacing="0.1" fill="#8a8a8a">730</text>
<text x="634.4" y="185.3" text-anchor="middle" font-family="Liberation Sans, sans-serif" font-size="9.4" letter-spacing="0.1" fill="#8a8a8a">720</text>
<path d="M206.5,177 V181 M206.5,184 V189 M206.5,190.4 V194.6" stroke="#555" stroke-width="1.15"/>
<path d="M4.2,183.5 H14" stroke="#8a8a8a" stroke-width="1" stroke-dasharray="1 1"/>
<path d="M6.5,181 V190.6" stroke="#8a8a8a" stroke-width="1" stroke-dasharray="1 1"/>
<path d="M6.8,183.8 L11.6,188.6" stroke="#777" stroke-width="1.1"/>
<path d="M12.9,189.9 L10.2,189.3 L12.3,187.2 Z" fill="#777" stroke="#777" stroke-width="0.6"/>
</svg>
<svg style="top:195px" width="18" height="303" viewBox="0 195 18 303">
<rect x="13.8" y="200.86" width="1.2" height="1.2" fill="#5a5a5a"/>
<rect x="13.8" y="207.47" width="1.2" height="1.2" fill="#5a5a5a"/>
<rect x="13.8" y="214.09" width="1.2" height="1.2" fill="#5a5a5a"/>
<rect x="10" y="220.75" width="5" height="1.1" fill="#555"/>
<rect x="13.8" y="227.32" width="1.2" height="1.2" fill="#5a5a5a"/>
<rect x="13.8" y="233.93" width="1.2" height="1.2" fill="#5a5a5a"/>
<rect x="13.8" y="240.55" width="1.2" height="1.2" fill="#5a5a5a"/>
<rect x="13.8" y="247.16" width="1.2" height="1.2" fill="#5a5a5a"/>
<rect x="12.9" y="253.82" width="2.1" height="1.1" fill="#5a5a5a"/>
<rect x="13.8" y="260.39" width="1.2" height="1.2" fill="#5a5a5a"/>
<rect x="13.8" y="267.00" width="1.2" height="1.2" fill="#5a5a5a"/>
<rect x="13.8" y="273.62" width="1.2" height="1.2" fill="#5a5a5a"/>
<rect x="13.8" y="280.24" width="1.2" height="1.2" fill="#5a5a5a"/>
<rect x="10" y="286.90" width="5" height="1.1" fill="#555"/>
<rect x="13.8" y="293.46" width="1.2" height="1.2" fill="#5a5a5a"/>
<rect x="13.8" y="300.08" width="1.2" height="1.2" fill="#5a5a5a"/>
<rect x="13.8" y="306.69" width="1.2" height="1.2" fill="#5a5a5a"/>
<rect x="13.8" y="313.31" width="1.2" height="1.2" fill="#5a5a5a"/>
<rect x="12.9" y="319.98" width="2.1" height="1.1" fill="#5a5a5a"/>
<rect x="13.8" y="326.54" width="1.2" height="1.2" fill="#5a5a5a"/>
<rect x="13.8" y="333.15" width="1.2" height="1.2" fill="#5a5a5a"/>
<rect x="13.8" y="339.77" width="1.2" height="1.2" fill="#5a5a5a"/>
<rect x="13.8" y="346.38" width="1.2" height="1.2" fill="#5a5a5a"/>
<rect x="10" y="353.05" width="5" height="1.1" fill="#555"/>
<rect x="13.8" y="359.62" width="1.2" height="1.2" fill="#5a5a5a"/>
<rect x="13.8" y="366.23" width="1.2" height="1.2" fill="#5a5a5a"/>
<rect x="13.8" y="372.85" width="1.2" height="1.2" fill="#5a5a5a"/>
<rect x="13.8" y="379.46" width="1.2" height="1.2" fill="#5a5a5a"/>
<rect x="12.9" y="386.12" width="2.1" height="1.1" fill="#5a5a5a"/>
<rect x="13.8" y="392.69" width="1.2" height="1.2" fill="#5a5a5a"/>
<rect x="13.8" y="399.31" width="1.2" height="1.2" fill="#5a5a5a"/>
<rect x="13.8" y="405.92" width="1.2" height="1.2" fill="#5a5a5a"/>
<rect x="13.8" y="412.53" width="1.2" height="1.2" fill="#5a5a5a"/>
<rect x="10" y="419.20" width="5" height="1.1" fill="#555"/>
<rect x="13.8" y="425.76" width="1.2" height="1.2" fill="#5a5a5a"/>
<rect x="13.8" y="432.38" width="1.2" height="1.2" fill="#5a5a5a"/>
<rect x="13.8" y="439.00" width="1.2" height="1.2" fill="#5a5a5a"/>
<rect x="13.8" y="445.61" width="1.2" height="1.2" fill="#5a5a5a"/>
<rect x="12.9" y="452.28" width="2.1" height="1.1" fill="#5a5a5a"/>
<rect x="13.8" y="458.84" width="1.2" height="1.2" fill="#5a5a5a"/>
<rect x="13.8" y="465.45" width="1.2" height="1.2" fill="#5a5a5a"/>
<rect x="13.8" y="472.07" width="1.2" height="1.2" fill="#5a5a5a"/>
<rect x="13.8" y="478.69" width="1.2" height="1.2" fill="#5a5a5a"/>
<rect x="10" y="485.35" width="5" height="1.1" fill="#555"/>
<rect x="13.8" y="491.92" width="1.2" height="1.2" fill="#5a5a5a"/>
<text transform="translate(9.1,221.1) rotate(-90) scale(0.86,1)" text-anchor="middle" font-family="Liberation Sans, sans-serif" font-size="10.2" fill="#8a8a8a">270</text>
<text transform="translate(9.1,287.3) rotate(-90) scale(0.86,1)" text-anchor="middle" font-family="Liberation Sans, sans-serif" font-size="10.2" fill="#8a8a8a">260</text>
<text transform="translate(9.1,353.4) rotate(-90) scale(0.86,1)" text-anchor="middle" font-family="Liberation Sans, sans-serif" font-size="10.2" fill="#8a8a8a">250</text>
<text transform="translate(9.1,419.6) rotate(-90) scale(0.86,1)" text-anchor="middle" font-family="Liberation Sans, sans-serif" font-size="10.2" fill="#8a8a8a">240</text>
<text transform="translate(9.1,485.7) rotate(-90) scale(0.86,1)" text-anchor="middle" font-family="Liberation Sans, sans-serif" font-size="10.2" fill="#8a8a8a">230</text>
</svg>
<svg style="top:195px;left:18px" width="624" height="303" viewBox="18 195 624 303">
 <rect x="301.25" y="268.9" width="130.3" height="172.4" rx="10.6" ry="10.6" fill="#14b7c6" stroke="#231815" stroke-width="5"/>
</svg>
</body>
</html>
